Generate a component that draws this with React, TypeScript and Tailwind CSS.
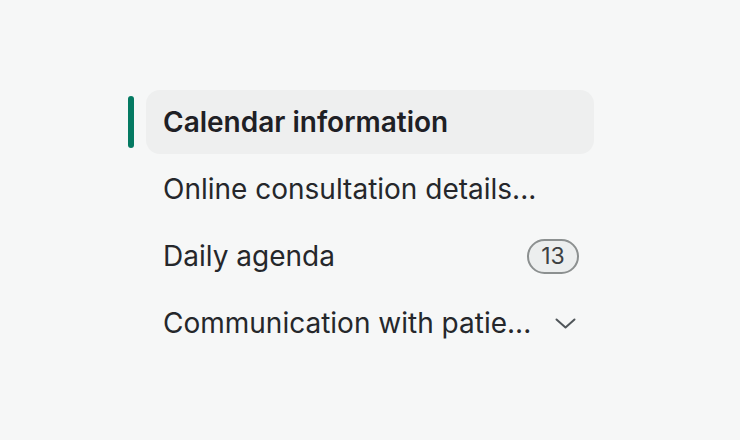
import React from "react";

function Row({ label, active, right }: { label: string; active?: boolean; right?: React.ReactNode }) {
  return (
    <div className="flex items-center h-16">
      <div className={`w-[6px] h-[52px] rounded-full ${active ? "bg-[#047a62]" : "bg-transparent"}`} />
      <div
        className={`ml-3 flex-1 h-16 flex items-center justify-between pl-[17px] pr-[15px] rounded-[14px] ${
          active ? "bg-[#eeefef]" : ""
        }`}
      >
        <span
          className={`text-[28px] leading-none whitespace-nowrap ${
            active ? "font-semibold text-[#1e2025]" : "font-normal text-[#25272b]"
          }`}
        >
          {label}
        </span>
        {right}
      </div>
    </div>
  );
}

export default function App() {
  return (
    <div
      className="w-[740px] h-[440px] bg-[#f6f7f7] pt-[90px] pl-[128px]"
      style={{ fontFamily: "Inter, 'Noto Sans', sans-serif" }}
    >
      <div className="w-[466px] flex flex-col gap-[3px]">
        <Row label="Calendar information" active />
        <Row label="Online consultation details..." />
        <Row
          label="Daily agenda"
          right={
            <span className="h-[35px] min-w-[52px] px-[10px] flex items-center justify-center rounded-full border-2 border-[#8c9090] bg-[#eceeee] text-[23px] leading-none text-[#3d4042]">
              13
            </span>
          }
        />
        <Row
          label="Communication with patie..."
          right={
            <svg width="21" height="11" viewBox="0 0 21 11" fill="none" className="mr-[3px]">
              <path d="M1.5 1.5L10.5 9.5L19.5 1.5" stroke="#50565a" strokeWidth="2" strokeLinecap="round" strokeLinejoin="round" />
            </svg>
          }
        />
      </div>
    </div>
  );
}
